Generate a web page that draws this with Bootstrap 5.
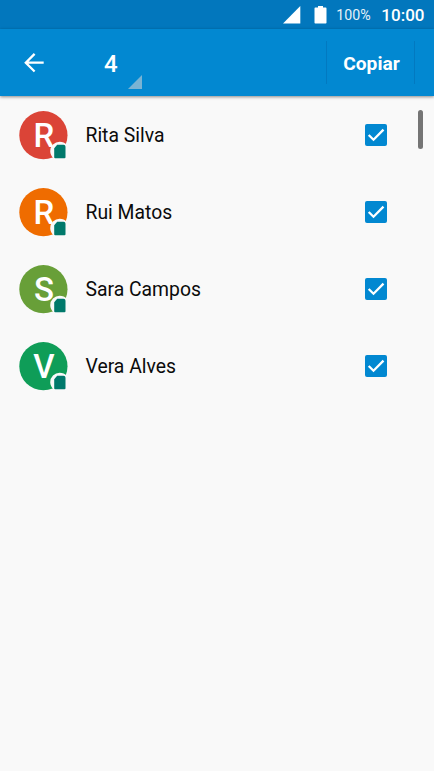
<!DOCTYPE html>
<html lang="pt">
  <head>
    <meta charset="UTF-8" />
    <meta name="viewport" content="width=device-width, initial-scale=1.0" />
    <title>Copiar contactos</title>
    <!-- Bootstrap CSS -->
    <link
      href="https://cdn.jsdelivr.net/npm/bootstrap@5.3.0/dist/css/bootstrap.min.css"
      rel="stylesheet"
    />
    <style>
      body {
        font-family: Roboto, "Liberation Sans", sans-serif;
        background-color: #f9f9f9;
        color: #0b0b0b;
        height: 100vh;
        overflow: hidden;
      }

      .status-bar {
        height: 29px;
        padding-right: 9.5px;
        background-color: #0277bd;
        color: #fff;
      }

      .status-level {
        font-size: 14.2px;
        width: 34px;
        margin: 2px 11px 0 9.5px;
        opacity: 0.9;
      }

      .status-clock {
        font-size: 17px;
        font-weight: 500;
        margin-top: 2px;
      }

      .app-bar {
        height: 67px;
        padding: 0 19px 0 22px;
        background-color: #0288d1;
        color: #fff;
        box-shadow: 0 1px 3px rgba(0, 0, 0, 0.45);
      }

      /* Selection counter with its dropdown corner */
      .counter {
        width: 62px;
        height: 67px;
        margin-left: 58px;
      }

      .counter-value {
        font-size: 24px;
        font-weight: 500;
        line-height: 28px;
        margin-top: 21px;
      }

      .counter-corner {
        margin: 0 0 7px -38px;
      }

      .copy-btn {
        width: 89px;
        height: 43px;
        border: solid #0279c0;
        border-width: 0 1px;
        border-radius: 0;
        color: #fff;
        font-size: 19.2px;
        font-weight: 700;
      }

      .copy-btn span {
        display: block;
        padding: 3px 0 0 2px;
      }

      .contact-row {
        height: 77px;
        padding: 0 47px 0 19px;
      }

      .avatar {
        width: 49px;
        height: 49px;
        margin: 1px 17.5px 0 0;
      }

      .avatar text {
        font-size: 33px;
        font-weight: 500;
        fill: #fff;
        text-anchor: middle;
      }

      .contact-name {
        font-size: 19.35px;
        line-height: 24px;
        padding-top: 3px;
      }

      .scroll-thumb {
        top: 13.5px;
        right: 11px;
        width: 5px;
        height: 39px;
        border-radius: 3px;
        background-color: #757575;
      }
    </style>
  </head>
  <body>
    <!-- Status bar -->
    <div class="status-bar d-flex align-items-center justify-content-end">
      <svg width="44" height="18" viewBox="0 0 44 18">
        <path d="M0 17.5L17.3 0V17.5z" fill="#fff" />
        <path d="M35 0h5v1.6h2.7a.8.8 0 0 1 .8.8V16.7a.8.8 0 0 1-.8.8H32.3a.8.8 0 0 1-.8-.8V2.4a.8.8 0 0 1 .8-.8H35z" fill="#fff" />
      </svg>
      <span class="status-level">100%</span>
      <span class="status-clock">10:00</span>
    </div>

    <!-- App bar -->
    <header class="app-bar d-flex align-items-center position-relative">
      <svg width="24" height="24" viewBox="0 0 24 24" fill="none" stroke="#fff" stroke-width="2.3">
        <path d="M21.7 11.7H3.5M12.6 2.9L3.8 11.7l8.8 8.8" />
      </svg>
      <div class="counter d-flex">
        <span class="counter-value">4</span>
      </div>
      <svg class="counter-corner align-self-end" width="14" height="14" viewBox="0 0 14 14">
        <path d="M14 0V14H0z" fill="#7ab3d3" />
      </svg>
      <button type="button" class="copy-btn btn p-0 ms-auto"><span>Copiar</span></button>
    </header>

    <!-- Contacts -->
    <main class="position-relative">
      <ul class="list-unstyled m-0" id="contacts"></ul>
      <div class="scroll-thumb position-absolute"></div>
    </main>

    <!-- Bootstrap JS -->
    <script src="https://cdn.jsdelivr.net/npm/bootstrap@5.3.0/dist/js/bootstrap.bundle.min.js"></script>

    <script>
      const contacts = [
        { name: "Rita Silva", color: "#db4437" },
        { name: "Rui Matos", color: "#ef6c00" },
        { name: "Sara Campos", color: "#689f38" },
        { name: "Vera Alves", color: "#0f9d58" },
      ];

      // Build one row per contact: avatar with account badge, name, checkbox
      document.getElementById("contacts").innerHTML = contacts
        .map(
          ({ name, color }) => `
          <li class="contact-row d-flex align-items-center">
            <svg class="avatar" viewBox="0 0 49 49">
              <circle cx="24.4" cy="24.2" r="24.1" fill="${color}" />
              <text x="25" y="36.2">${name[0]}</text>
              <path d="M34.5 48.4V47.2A9.5 9.5 0 0 1 31.2 40.3 9.5 9.5 0 0 1 40.7 30.8c2.8 0 5.4 1.2 7.2 3.1V48.4z" fill="#f9f9f9" />
              <path d="M38.2 33.8h6.3a2 2 0 0 1 2 2v10.5a1 1 0 0 1-1 1h-9.3a1 1 0 0 1-1-1V37.2z" fill="#00796b" />
            </svg>
            <span class="contact-name">${name}</span>
            <svg class="ms-auto" width="22" height="22" viewBox="0 0 22 22">
              <rect width="22" height="22" rx="2" fill="#0288d1" />
              <path d="M3.7 11l4.8 4.7L18.5 5.6" fill="none" stroke="#fff" stroke-width="2.3" />
            </svg>
          </li>`
        )
        .join("");
    </script>
  </body>
</html>
